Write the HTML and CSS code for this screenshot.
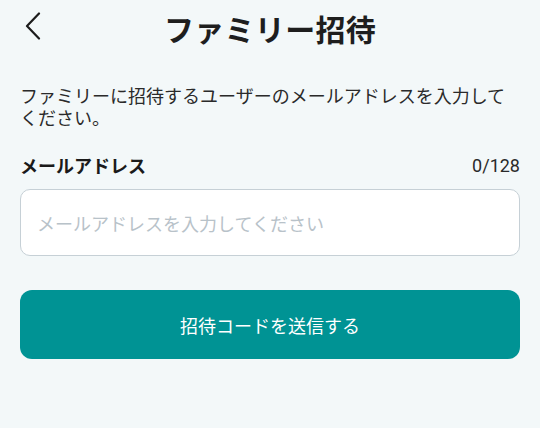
FILE: index.html
```html
<!DOCTYPE html>
<html lang="ja">
<head>
<meta charset="utf-8">
<link rel="stylesheet" href="styles.css">
</head>
<body>
<div class="page">
  <header class="header">
    <button class="back" aria-label="戻る">
      <svg width="16" height="28" viewBox="0 0 16 28"><path d="M14 1.5 L2 14 L14 26.5" fill="none" stroke="#1c1c1c" stroke-width="2.2" stroke-linecap="round" stroke-linejoin="round"/></svg>
    </button>
    <h1 class="title">ファミリー招待</h1>
  </header>
  <main class="content">
    <p class="desc">ファミリーに招待するユーザーのメールアドレスを入力してください。</p>
    <div class="label-row">
      <span class="label">メールアドレス</span>
      <span class="counter">0/128</span>
    </div>
    <input class="input" type="email" placeholder="メールアドレスを入力してください">
    <button class="submit">招待コードを送信する</button>
  </main>
</div>
</body>
</html>
```
FILE: styles.css
```css
html, body {
  margin: 0;
  padding: 0;
  background: #f3f8f9;
}
body {
  font-family: "Noto Sans CJK JP", "Noto Sans", sans-serif;
  color: #222;
}
.page {
  width: 540px;
  height: 428px;
}
.header {
  position: relative;
  height: 56px;
  display: flex;
  align-items: center;
  justify-content: center;
}
.back {
  position: absolute;
  left: 25px;
  top: 12px;
  padding: 0;
  border: 0;
  background: none;
  width: 16px;
  height: 28px;
}
.back svg { display: block; }
.title {
  margin: 0;
  font-size: 30px;
  font-weight: 700;
  line-height: 56px;
  color: #1e1e1e;
  letter-spacing: 0.3px;
}
.content {
  padding: 28px 20px 0 20px;
}
.desc {
  margin: 0;
  font-size: 18px;
  line-height: 22px;
  color: #2a2a2a;
}
.label-row {
  display: flex;
  justify-content: space-between;
  align-items: center;
  margin-top: 25px;
  height: 24px;
}
.label {
  font-size: 18px;
  font-weight: 700;
  color: #1a1a1a;
}
.counter {
  font-family: Roboto, "Noto Sans", sans-serif;
  font-size: 18px;
  color: #2a2a2a;
}
.input {
  display: block;
  box-sizing: border-box;
  width: 100%;
  height: 67px;
  margin-top: 12px;
  padding: 0 16px;
  border: 1.5px solid #c6d0d6;
  border-radius: 10px;
  background: #fff;
  font-family: inherit;
  font-size: 18px;
  outline: none;
}
.input::placeholder {
  color: #b8c2c9;
}
.submit {
  display: block;
  width: 100%;
  height: 69px;
  margin-top: 34px;
  border: 0;
  border-radius: 12px;
  background: #009394;
  color: #fff;
  font-family: inherit;
  font-size: 18px;
}
```
